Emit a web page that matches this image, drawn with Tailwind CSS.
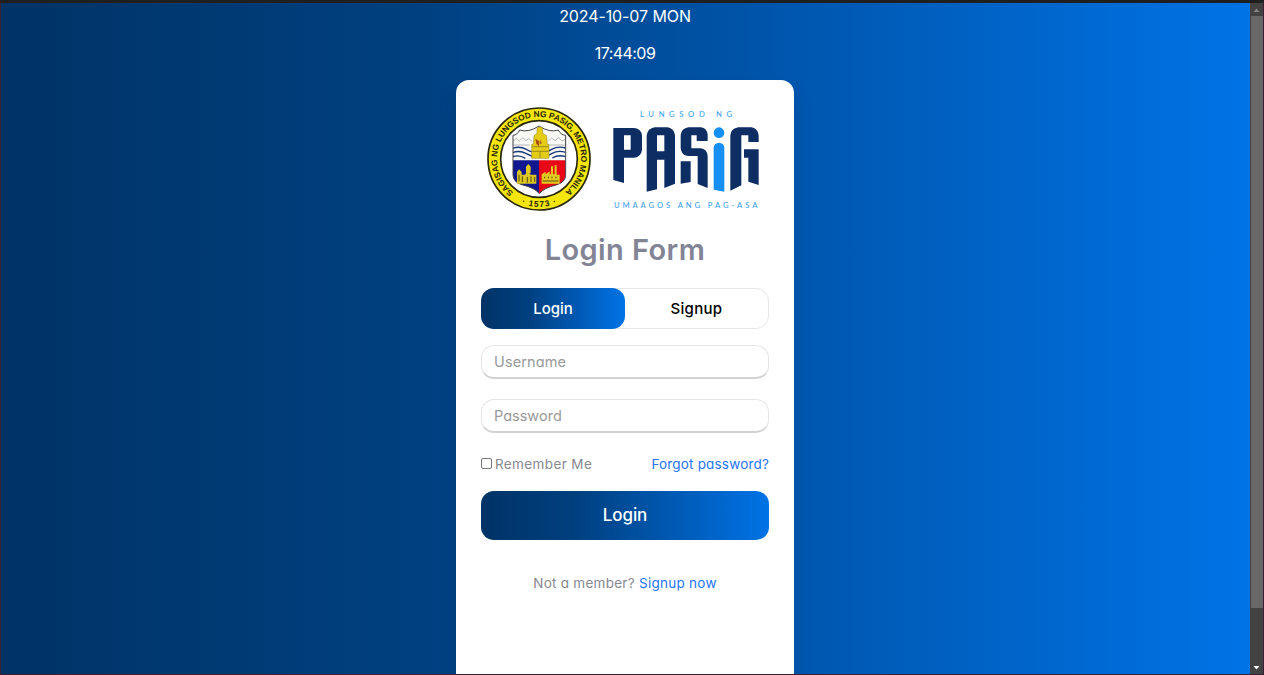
<!DOCTYPE html>
<html lang="en">
<head>
<meta charset="utf-8">
<title>Login Form</title>
<script src="https://cdn.jsdelivr.net/npm/@tailwindcss/browser@4"></script>
</head>
<body class="h-[675px] w-[1264px] overflow-hidden bg-[#1f1f1f] font-['Inter',sans-serif] [font-feature-settings:'cv11']">
<div class="flex h-full w-full flex-col border-x border-b border-[#3c2030] border-t-[3px] border-t-[#1f1f1f]">
  <div class="flex min-h-0 flex-1">
    <main class="flex w-[1249px] shrink-0 flex-col items-center overflow-hidden bg-[linear-gradient(to_right,#003366,#004080,#0059b3,#0073e6)] pr-px">
      <p class="mt-[1px] h-6 text-[16px] leading-6 tracking-[-0.1px] whitespace-nowrap text-white">2024-10-07 MON</p>
      <p class="mt-[13px] h-6 text-[16px] leading-6 tracking-[-0.55px] whitespace-nowrap text-white">17:44:09</p>
      <section class="mt-[15px] flex h-[640px] w-[338px] shrink-0 flex-col rounded-[13px] bg-white px-[25px] shadow-[0_13px_20px_rgba(0,0,0,0.12)]">
        <div class="-ml-px mt-[18px] flex h-[120px] w-[300px] shrink-0">
          <svg class="h-[120px] w-[120px] shrink-0" viewBox="0 0 360 360">
            <defs>
              <path id="ringTop" d="M101 283 A126 126 0 1 1 253 283"/>
              <path id="ringBottom" d="M92 299 A144 144 0 0 0 262 299"/>
              <clipPath id="shield"><path d="M99 112 Q112 111 119 96 Q145 105 177 84 Q209 105 235 96 Q242 111 257 112 V230 Q257 252 231 260 Q190 270 178 287 Q166 270 125 260 Q99 252 99 230Z"/></clipPath>
            </defs>
            <circle cx="177" cy="183" r="153" fill="#f4e60c" stroke="#29260e" stroke-width="5"/>
            <circle cx="177" cy="183" r="115" fill="#fff" stroke="#29260e" stroke-width="5"/>
            <g font-family="Liberation Sans, sans-serif" font-weight="700" fill="#28240c">
              <text font-size="25"><textPath href="#ringTop" textLength="626">SAGISAG NG LUNGSOD NG PASIG, METRO MANILA</textPath></text>
              <text font-size="25"><textPath href="#ringBottom" startOffset="50%" text-anchor="middle" textLength="108">·  1573  ·</textPath></text>
            </g>
            <g clip-path="url(#shield)">
              <path fill="#f8f8f5" d="M95 80h170v110H95z"/>
              <path fill="none" stroke="#999" stroke-width="2" d="M99 130l10-9 9 8 10-10 10 9 8-6 10 8M205 129l10-9 10 8 11-9 10 10 12-6M99 141h50M207 141h50"/>
              <path fill="none" stroke="#17377e" stroke-width="4" d="M97 151q22-8 42 3t31 10M97 164q22-8 42 3t31 8M97 176q20-7 39 5M257 150q-23-7-42 4t-30 9M257 163q-23-7-42 4t-29 8M257 176q-22-7-40 4"/>
              <path fill="#11178f" d="M99 187h78v104H99z"/><path fill="#e80716" d="M177 187h82v104h-82z"/>
            </g>
            <path fill="none" stroke="#424242" stroke-width="3" d="M99 112 Q112 111 119 96 Q145 105 177 84 Q209 105 235 96 Q242 111 257 112 V230 Q257 252 231 260 Q190 270 178 287 Q166 270 125 260 Q99 252 99 230Z"/>
            <path fill="#e4cc17" stroke="#8f8120" stroke-width="1.5" d="M171 91q9-9 17 0v15l12 7 2 26h5v42h-52v-42h5l2-26 9-7z"/>
            <path fill="#aa4c18" d="M166 122l12 8-1 15-8-8zM181 124l4 12-5 3z"/>
            <path fill="none" stroke="#776c21" stroke-width="2" d="M156 146h50M157 160h49M180 160v20"/>
            <path fill="#d9c620" d="M111 257v-35l6-8 8 8v8h10l8-12 9 12h17v27z"/>
            <path fill="#e2cb1e" d="M138 224v-18l7-8 7 8v20zM185 257v-28l12-8v8l12-9v9h4v-24h6v24h5v-27h6v28h9v27z"/>
            <path stroke="#574819" stroke-width="3" d="M117 230v20M127 235v17M142 237v17M153 235v17M164 237v15M194 236v5M205 236v5M216 236v5M228 236v5M188 249h47" fill="none"/>
          </svg>
          <svg class="h-[120px] w-[180px] shrink-0" viewBox="0 0 540 360">
            <g font-family="Lato, sans-serif" fill="#2f9af2">
              <text x="120" y="56" font-size="23" textLength="276">LUNGSOD NG</text>
              <text x="42" y="329" font-size="23" textLength="430">UMAAGOS ANG PAG-ASA</text>
            </g>
            <g fill="#0d2d63">
              <path fill-rule="evenodd" d="M40 90H103Q124 92 126 113V156Q123 177 103 179H72V255L40 246ZM72 112V155H92V112Z"/>
              <path fill-rule="evenodd" d="M140 281V112Q143 91 164 88H203Q222 91 225 112V257L193 270V185H171V274ZM171 112V160H193V112Z"/>
              <path d="M242 112Q244 91 265 88H303Q321 91 323 110V129H290V112H274V151H302Q321 153 323 174V270L293 258V174H264Q244 172 242 151ZM242 190H272V252L242 257Z"/>
              <path d="M391 278V112Q393 91 415 88H455Q474 92 476 112V132H445V112H424V262ZM432 154H476V261L445 251V179H432Z"/>
            </g>
            <g fill="#168ff5"><circle cx="357" cy="104" r="16"/><path d="M341 148Q343 135 357 134Q371 135 373 148V281L341 275Z"/></g>
          </svg>
        </div>
        <h1 class="mt-[12px] h-10 text-center text-[29px] leading-10 font-semibold tracking-[0.42px] whitespace-nowrap text-[#838496]">Login Form</h1>
        <div class="mt-[18px] flex h-[41px] shrink-0 rounded-[13px] border border-[#e7e7e7] text-[15px] font-medium">
          <button class="-my-px -ml-px w-[144px] rounded-[13px] bg-[linear-gradient(to_right,#003366,#004080,#0059b3,#0073e6)] pt-px text-white">Login</button>
          <button class="flex-1 pt-px tracking-[0.3px] text-black">Signup</button>
        </div>
        <input type="text" placeholder="Username" class="mt-4 h-[34px] shrink-0 rounded-[13px] border border-b-2 border-[#e5e5e5] border-b-[#d2d2d2] pl-3 text-[14.5px] tracking-[0.1px] placeholder:text-[#999]">
        <input type="password" placeholder="Password" class="mt-5 h-[34px] shrink-0 rounded-[13px] border border-b-2 border-[#e5e5e5] border-b-[#d2d2d2] pb-px pl-3 text-[14.5px] placeholder:text-[#999]">
        <div class="mt-[21px] flex h-5 shrink-0 items-center whitespace-nowrap text-[13.5px] text-[#878892]">
          <label class="flex items-center gap-[3px] tracking-[0.38px]"><input type="checkbox" class="-mt-px h-[11px] w-[11px] appearance-none rounded-[2px] border border-[#767676] bg-white">Remember Me</label>
          <a class="ml-auto tracking-[0.18px] text-[#2674f8]">Forgot password?</a>
        </div>
        <button class="mt-[17px] h-[49px] shrink-0 rounded-[13px] bg-[linear-gradient(to_right,#003366,#004080,#0059b3,#0073e6)] text-[17px] font-medium tracking-[-0.1px] text-white">Login</button>
        <p class="mt-[33px] text-center text-[13.5px] leading-5 tracking-[0.27px] whitespace-nowrap text-[#878892]">Not a member? <a class="text-[#2674f8]">Signup now</a></p>
      </section>
    </main>
    <aside class="flex w-[13px] shrink-0 flex-col items-center bg-[#424242]">
      <svg class="h-[13px] w-[13px] shrink-0" viewBox="0 0 13 13"><path d="M3.5 9L6.5 5.5L9.5 9Z" fill="#858585"/></svg>
      <div class="h-[592px] w-[12px] shrink-0 bg-[#686868]"></div>
      <svg class="mt-auto h-[13px] w-[13px] shrink-0" viewBox="0 0 13 13"><path d="M3.5 5L6.5 8.5L9.5 5Z" fill="#fff"/></svg>
    </aside>
  </div>
</div>
</body>
</html>
